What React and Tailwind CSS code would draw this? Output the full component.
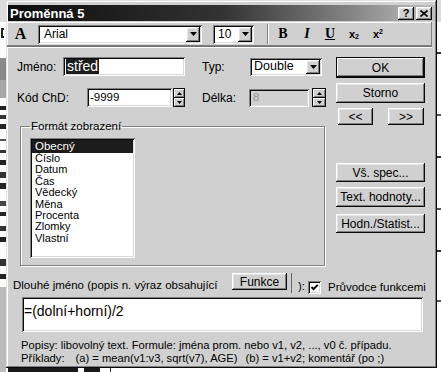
const raised = "shadow-[inset_-1px_-1px_0_#0a0a0a,inset_1px_1px_0_#ffffff,inset_-2px_-2px_0_#808080,inset_2px_2px_0_#e4e4e4]";
const sunken = "shadow-[inset_1px_1px_0_#808080,inset_-1px_-1px_0_#ffffff,inset_2px_2px_0_#0a0a0a,inset_-2px_-2px_0_#d8d8d8]";
const defBtn = "shadow-[inset_0_0_0_1px_#0a0a0a,inset_-2px_-2px_0_#0a0a0a,inset_2px_2px_0_#ffffff,inset_-3px_-3px_0_#808080]";

function DownArrow() {
  return (
    <svg width="7" height="4" viewBox="0 0 7 4">
      <path d="M0 0h7L3.5 4z" fill="#000" />
    </svg>
  );
}

function DropBtn({ className }) {
  return (
    <div className={`${className} ${raised} bg-[#d0d0d0] flex items-center justify-center`}>
      <DownArrow />
    </div>
  );
}

function Spinner({ className }) {
  return (
    <div className={`${className} h-[19px] flex flex-col bg-[#0a0a0a] p-[1px] gap-[1px]`}>
      <div className={`flex-1 bg-[#d0d0d0] shadow-[inset_1px_1px_0_#ffffff,inset_-1px_-1px_0_#808080] flex items-center justify-center`}>
        <svg width="5" height="3" viewBox="0 0 5 3">
          <path d="M0 3h5L2.5 0z" fill="#000" />
        </svg>
      </div>
      <div className={`flex-1 bg-[#d0d0d0] shadow-[inset_1px_1px_0_#ffffff,inset_-1px_-1px_0_#808080] flex items-center justify-center`}>
        <svg width="5" height="3" viewBox="0 0 5 3">
          <path d="M0 0h5L2.5 3z" fill="#000" />
        </svg>
      </div>
    </div>
  );
}

function Btn({ className, children, def }) {
  return (
    <div className={`${className} ${def ? defBtn : raised} bg-[#d0d0d0] flex items-center justify-center text-[12px] leading-none`}>
      {children}
    </div>
  );
}

const items = ["Číslo", "Datum", "Čas", "Vědecký", "Měna", "Procenta", "Zlomky", "Vlastní"];

function LeftStrip() {
  return (
    <div className="w-[6px] h-full bg-white flex flex-col">
      <div className="h-[22px] bg-[#dcdcdc]" />
      <div className="h-[10px] mt-[6px] w-[3px] ml-[1px] border-l-2 border-y-2 border-[#222]" />
      <div className="h-[22px] mt-[20px] bg-[#8a8a8a]" />
      <div className="h-[18px] bg-[#a8a8a8]" />
      <div className="h-[4px] mt-[8px] bg-[#222]" />
      <div className="h-[4px] mt-[5px] bg-[#333]" />
      <div className="h-[5px] mt-[5px] bg-[#222]" />
      <div className="h-[2px] mt-[10px] bg-[#555]" />
      <div className="h-[3px] mt-[9px] bg-[#333]" />
      <div className="h-[5px] mt-[7px] bg-[#222]" />
      <div className="h-[6px] mt-[7px] bg-[#333]" />
      <div className="h-[6px] mt-[5px] bg-[#222]" />
      <div className="h-[5px] mt-[12px] bg-[#444]" />
      <div className="h-[4px] mt-[6px] bg-[#222]" />
      <div className="h-[5px] mt-[10px] bg-[#333]" />
      <div className="h-[5px] mt-[6px] bg-[#222]" />
      <div className="h-[7px] mt-[17px] bg-[#333]" />
      <div className="h-[5px] mt-[8px] bg-[#222]" />
      <div className="flex-1 mt-[8px] bg-[#bbbbbb]" />
    </div>
  );
}

function RightStrip() {
  return (
    <div className="w-[4px] h-full bg-white flex flex-col">
      <div className="h-[22px] bg-[#dcdcdc]" />
      <div className="h-[2px] mt-[30px] bg-[#333]" />
      <div className="h-[2px] mt-[60px] bg-[#555]" />
      <div className="h-[2px] mt-[40px] bg-[#333]" />
      <div className="h-[2px] mt-[50px] bg-[#555]" />
      <div className="h-[2px] mt-[40px] bg-[#333]" />
      <div className="h-[2px] mt-[48px] bg-[#555]" />
    </div>
  );
}

function BottomStrip() {
  return (
    <div className="h-[4px] flex bg-white">
      <div className="w-[6px] bg-[#bbb]" />
      <div className="w-[70px] ml-[2px] bg-[#1a1a1a]" />
      <div className="w-[16px] ml-[6px] bg-[#1a1a1a]" />
      <div className="w-[1px] ml-[10px] bg-[#333]" />
    </div>
  );
}

function Dialog() {
  return (
    <div className="w-[431px] h-[368px] bg-[#d0d0d0] flex flex-col shadow-[inset_-1px_-1px_0_#0a0a0a,inset_1px_1px_0_#e0e0e0,inset_-2px_-2px_0_#808080,inset_2px_2px_0_#ffffff]">
      {/* Title bar */}
      <div className="mx-[2px] mt-[5px] h-[16px] flex items-center bg-linear-to-r from-[#0c0c0c] via-[#333333] to-[#c0c0c0] pl-[2px] pr-[3px]">
        <span className="text-white font-bold text-[13px] leading-none">Proměnná 5</span>
        <div className="flex-1" />
        <div className={`w-[16px] h-[13px] ${raised} bg-[#d0d0d0] flex items-center justify-center text-[11px] font-bold leading-none`}>?</div>
        <div className={`w-[16px] h-[13px] ml-[2px] ${raised} bg-[#d0d0d0] flex items-center justify-center`}>
          <svg width="8" height="7" viewBox="0 0 8 7">
            <path d="M0.5 0.5L7.5 6.5M7.5 0.5L0.5 6.5" stroke="#000" strokeWidth="1.7" />
          </svg>
        </div>
      </div>

      {/* Toolbar */}
      <div className="ml-[1px] mr-[5px] mt-[1px] h-[24px] flex items-center shadow-[inset_-1px_-1px_0_#808080,inset_1px_1px_0_#ffffff]">
        <div className="ml-[7px] w-[13px] text-center font-['Liberation_Serif',serif] font-bold text-[16px] leading-none">A</div>
        <div className={`ml-[11px] w-[164px] h-[19px] bg-white ${sunken} flex items-center p-[2px]`}>
          <span className="flex-1 pl-[4px] text-[12px] leading-none">Arial</span>
          <DropBtn className="w-[14px] h-full" />
        </div>
        <div className={`ml-[11px] w-[41px] h-[19px] bg-white ${sunken} flex items-center p-[2px]`}>
          <span className="flex-1 pl-[3px] text-[12px] leading-none">10</span>
          <DropBtn className="w-[14px] h-full" />
        </div>
        <div className="ml-[13px] w-[2px] h-[20px] border-l border-[#808080] border-r border-r-white" />
        <div className="ml-[5px] w-[18px] text-center font-['Liberation_Serif',serif] font-bold text-[14px] leading-none">B</div>
        <div className="ml-[6px] w-[18px] text-center font-['Liberation_Serif',serif] font-bold italic text-[14px] leading-none">I</div>
        <div className="ml-[5px] w-[18px] text-center font-['Liberation_Serif',serif] font-bold underline text-[14px] leading-none">U</div>
        <div className="ml-[6px] w-[18px] text-center font-bold text-[11px] leading-none">
          x<sub className="text-[7px]">2</sub>
        </div>
        <div className="ml-[6px] w-[18px] text-center font-bold text-[11px] leading-none">
          x<sup className="text-[7px]">2</sup>
        </div>
      </div>
      <div className="ml-[1px] mr-[5px] h-[2px] border-t border-[#707070] border-b border-b-white" />

      {/* Main area */}
      <div className="flex">
        <div className="w-[330px] flex flex-col">
          {/* Row 1 */}
          <div className="mt-[9px] h-[19px] flex items-center pl-[11px] text-[12px]">
            <span className="w-[46px]">Jméno:</span>
            <div className={`w-[122px] h-[19px] bg-white ${sunken} flex items-center pl-[3px]`}>
              <span className="bg-[#1c1c1c] text-white text-[14px] leading-[15px] px-[1px]">střed</span>
            </div>
            <span className="ml-[17px] w-[48px]">Typ:</span>
            <div className={`w-[72px] h-[18px] bg-white ${sunken} flex items-center p-[2px]`}>
              <span className="flex-1 pl-[2px] text-[12.5px] leading-none">Double</span>
              <DropBtn className="w-[14px] h-full" />
            </div>
          </div>
          {/* Row 2 */}
          <div className="mt-[12px] h-[19px] flex items-center pl-[11px] text-[12px]">
            <span className="w-[70px]">Kód ChD:</span>
            <div className={`w-[85px] h-[19px] bg-white ${sunken} flex items-center pl-[3px]`}>
              <span className="text-[11.5px] leading-none">-9999</span>
            </div>
            <Spinner className="ml-[1px] w-[12px]" />
            <span className="ml-[17px] w-[47px]">Délka:</span>
            <div className={`w-[60px] h-[18px] bg-[#d0d0d0] ${sunken} flex items-center pl-[4px]`}>
              <span className="text-[11.5px] leading-none text-[#959595]">8</span>
            </div>
            <Spinner className="ml-[3px] w-[14px]" />
          </div>
          {/* Group box */}
          <fieldset className="mt-[13px] ml-[14px] w-[305px] h-[146px] border border-[#808080] shadow-[inset_1px_1px_0_#ffffff,1px_1px_0_#ffffff] pl-[9px]">
            <legend className="px-[1px] text-[11.5px] leading-[13px]">Formát zobrazení</legend>
            <div className={`mt-[5px] w-[105px] h-[120px] bg-white ${sunken} p-[2px] flex flex-col text-[11px]`}>
              <div className="h-[13px] bg-[#1c1c1c] text-white leading-[13px] pl-[3px] text-[11.5px]">Obecný</div>
              {items.map((t) => (
                <div key={t} className="h-[11.4px] leading-[11.4px] pl-[3px]">
                  {t}
                </div>
              ))}
            </div>
          </fieldset>
        </div>
        {/* Right column */}
        <div className="w-[89px] flex flex-col">
          <Btn def className="mt-[9px] h-[21px]">OK</Btn>
          <Btn className="mt-[5px] h-[20px]">Storno</Btn>
          <div className="mt-[5px] h-[17px] flex">
            <Btn className="ml-[2px] w-[35px] h-[17px] text-[11px]">&lt;&lt;</Btn>
            <Btn className="ml-[15px] w-[36px] h-[17px] text-[11px]">&gt;&gt;</Btn>
          </div>
          <Btn className="mt-[38px] h-[19px]">Vš. spec...</Btn>
          <Btn className="mt-[5px] h-[20px]">Text. hodnoty...</Btn>
          <Btn className="mt-[7px] h-[19px]">Hodn./Statist...</Btn>
        </div>
      </div>

      {/* Long name row */}
      <div className="mt-[7px] h-[20px] flex items-start pl-[7px] text-[11.5px]">
        <span className="w-[219px] mt-[5px] leading-[14px] whitespace-nowrap">Dlouhé jméno (popis n. výraz obsahující</span>
        <Btn className="w-[55px] h-[17px]">Funkce</Btn>
        <div className="ml-[4px] w-[1px] h-[20px] bg-[#666]" />
        <span className="ml-[6px] mt-[6px] leading-[14px]">):</span>
        <div className={`ml-[3px] mt-[8px] w-[13px] h-[13px] bg-white ${sunken} flex items-center justify-center`}>
          <svg width="9" height="9" viewBox="0 0 9 9">
            <path d="M1.5 4L3.5 6.2L7.8 1.8" fill="none" stroke="#000" strokeWidth="1.9" />
          </svg>
        </div>
        <span className="ml-[7px] mt-[7px] leading-[14px] whitespace-nowrap">Průvodce funkcemi</span>
      </div>

      {/* Textarea */}
      <div className={`mt-[4px] ml-[16px] w-[401px] h-[35px] bg-white ${sunken} px-[2px] pt-[2px]`}>
        <span className="text-[14px] leading-[15px]">=(dolní+horní)/2</span>
      </div>

      {/* Help text */}
      <div className="mt-[7px] pl-[15px] text-[11.2px] leading-[13px] whitespace-nowrap">
        Popisy: libovolný text. Formule: jména prom. nebo v1, v2, ..., v0 č. případu.
      </div>
      <div className="pl-[15px] text-[11.2px] leading-[13px] whitespace-nowrap flex">
        <span>Příklady:</span>
        <span className="ml-[11px]">(a) = mean(v1:v3, sqrt(v7), AGE)</span>
        <span className="ml-[8px]">(b) = v1+v2; komentář (po ;)</span>
      </div>
    </div>
  );
}

export default function App() {
  return (
    <div className="w-[441px] h-[372px] bg-white overflow-hidden flex flex-col font-['Liberation_Sans',Arial,sans-serif] text-black">
      <div className="flex h-[368px]">
        <LeftStrip />
        <Dialog />
        <RightStrip />
      </div>
      <BottomStrip />
    </div>
  );
}
